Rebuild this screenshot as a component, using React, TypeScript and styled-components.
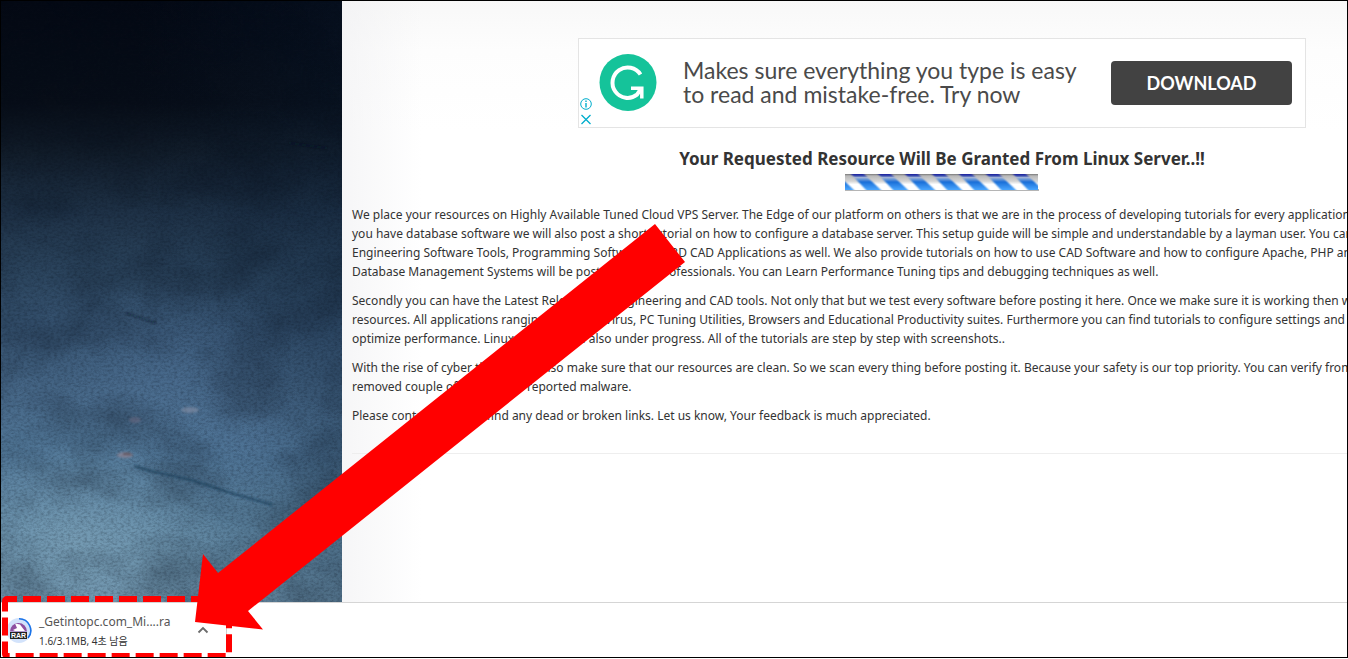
import React from "react";
import styled, { createGlobalStyle } from "styled-components";

const GlobalStyle = createGlobalStyle`
  *, *::before, *::after { box-sizing: border-box; }
  html, body { margin: 0; height: 100%; overflow: hidden; background: #fff; }
  #root { height: 100%; }
  body { font-family: "Noto Sans", "Noto Sans CJK KR", sans-serif; color: #333; }
`;

const Window = styled.div`
  position: relative;
  height: calc(100vh - 1px);
  display: flex;
  flex-direction: column;
  border: 1px solid #000;
  overflow: hidden;
`;

const Viewport = styled.div`
  flex: 1;
  min-height: 0;
  display: flex;
  overflow: hidden;
`;

const Backdrop = styled.div`
  flex: 0 0 341px;
  overflow: hidden;
  background: #0c1624;
`;

const BackdropArt = styled.svg`
  display: block;
  width: 100%;
  height: 100%;
`;

const Article = styled.main`
  flex: 1 0 1200px;
  padding: 37px 10px 0;
  background:
    linear-gradient(to right, rgba(240, 240, 242, 0.6), rgba(255, 255, 255, 0) 80px),
    linear-gradient(to bottom, #f8f8f8, #fdfdfd 50px, #fff 130px);
`;

const Ad = styled.section`
  display: flex;
  align-items: center;
  width: 728px;
  height: 90px;
  margin: 0 auto;
  padding-right: 13px;
  border: 1px solid #e4e4e4;
  background: #fff;
`;

const AdChoices = styled.div`
  align-self: flex-end;
  display: flex;
  flex-direction: column;
  gap: 2px;
  margin-right: 6px;
`;

const AdControl = styled.button`
  display: block;
  width: 14px;
  height: 14px;
  padding: 0;
  border: 0;
  background: none;
`;

const AdText = styled.p`
  flex: 1;
  margin: 0 0 2px 26px;
  font: 400 23px/24px Lato, sans-serif;
  color: #4a4a4a;
  white-space: nowrap;
`;

const DownloadButton = styled.button`
  width: 181px;
  height: 44px;
  padding: 0;
  border: 0;
  border-radius: 4px;
  background: #424242;
  color: #fff;
  font: 700 18px/24px Lato, sans-serif;
`;

const Title = styled.h1`
  margin: 18px 0 3px;
  text-align: center;
  font-size: 17px;
  line-height: 25px;
  font-weight: 700;
`;

const Loader = styled.svg`
  display: block;
  margin: 0 auto 13px;
`;

const Paragraph = styled.p`
  margin: 0 0 10px;
  font-size: 12px;
  line-height: 19px;
  white-space: nowrap;
`;

const Rule = styled.hr`
  margin: 28px 0 0;
  border: 0;
  border-top: 1px solid #eee;
`;

const DownloadBar = styled.footer`
  flex: 0 0 55px;
  display: flex;
  align-items: center;
  border-top: 1px solid #d5d5d5;
  background: #fff;
`;

const DownloadItem = styled.div`
  display: flex;
  align-items: center;
  width: 226px;
  height: 40px;
  padding: 0 13px 0 5px;
  border-right: 1px solid #d0d0d0;
`;

const FileInfo = styled.div`
  flex: 1;
  margin-left: 6px;
  padding-top: 2px;
`;

const FileName = styled.div`
  font-size: 12px;
  line-height: 20px;
  color: #555;
`;

const FileStatus = styled.div`
  font-size: 10px;
  line-height: 18px;
  color: #333;
`;

const MenuButton = styled.button`
  display: flex;
  width: 20px;
  height: 20px;
  align-items: center;
  justify-content: center;
  padding: 0;
  border: 0;
  background: none;
`;

const Annotation = styled.svg`
  position: absolute;
  left: -1px;
  bottom: -2px;
  pointer-events: none;
`;

const paragraphs = [
  [
    "We place your resources on Highly Available Tuned Cloud VPS Server. The Edge of our platform on others is that we are in the process of developing tutorials for every application. If",
    "you have database software we will also post a short tutorial on how to configure a database server. This setup guide will be simple and understandable by a layman user. You can find",
    "Engineering Software Tools, Programming Software and 3D CAD Applications as well. We also provide tutorials on how to use CAD Software and how to configure Apache, PHP and",
    "Database Management Systems will be posted by our professionals. You can Learn Performance Tuning tips and debugging techniques as well.",
  ],
  [
    "Secondly you can have the Latest Releases for Engineering and CAD tools. Not only that but we test every software before posting it here. Once we make sure it is working then we post",
    "resources. All applications ranging from Anti Virus, PC Tuning Utilities, Browsers and Educational Productivity suites. Furthermore you can find tutorials to configure settings and",
    "optimize performance. Linux tutorials are also under progress. All of the tutorials are step by step with screenshots..",
  ],
  [
    "With the rise of cyber threats, we also make sure that our resources are clean. So we scan every thing before posting it. Because your safety is our top priority. You can verify from",
    "removed couple of apps which reported malware.",
  ],
  ["Please contact us if you find any dead or broken links. Let us know, Your feedback is much appreciated."],
];

function GrungeWall() {
  return (
    <BackdropArt viewBox="0 0 341 601" preserveAspectRatio="none" aria-hidden="true">
      <defs>
        <linearGradient id="wall" x1="0" y1="0" x2="0" y2="1">
          <stop offset="0" stopColor="#040914" />
          <stop offset="0.17" stopColor="#080e18" />
          <stop offset="0.25" stopColor="#111c29" />
          <stop offset="0.35" stopColor="#1e3146" />
          <stop offset="0.45" stopColor="#2b445d" />
          <stop offset="0.55" stopColor="#375472" />
          <stop offset="0.66" stopColor="#476888" />
          <stop offset="0.76" stopColor="#527898" />
          <stop offset="0.88" stopColor="#648ca8" />
          <stop offset="1" stopColor="#6d92ab" />
        </linearGradient>
        <linearGradient id="side" x1="0" y1="0" x2="1" y2="0">
          <stop offset="0.4" stopColor="#0c1f36" stopOpacity="0" />
          <stop offset="1" stopColor="#0c1f36" stopOpacity="0.28" />
        </linearGradient>
        <radialGradient id="glow">
          <stop offset="0" stopColor="#8fb2c4" stopOpacity="0.35" />
          <stop offset="1" stopColor="#8fb2c4" stopOpacity="0" />
        </radialGradient>
        <radialGradient id="haze">
          <stop offset="0" stopColor="#6690bd" stopOpacity="0.22" />
          <stop offset="1" stopColor="#6690bd" stopOpacity="0" />
        </radialGradient>
        <filter id="grain" x="0" y="0" width="100%" height="100%" colorInterpolationFilters="sRGB">
          <feTurbulence type="fractalNoise" baseFrequency="0.3 0.45" numOctaves="3" seed="4" />
          <feColorMatrix values="0 0 0 0 0.01  0 0 0 0 0.03  0 0 0 0 0.07  1.6 0 0 0 -0.6" />
        </filter>
        <filter id="stain" x="0" y="0" width="100%" height="100%" colorInterpolationFilters="sRGB">
          <feTurbulence type="fractalNoise" baseFrequency="0.014 0.02" numOctaves="5" seed="9" />
          <feColorMatrix values="0 0 0 0 0.02  0 0 0 0 0.05  0 0 0 0 0.1  1.8 0 0 0 -0.7" />
        </filter>
        <filter id="soft"><feGaussianBlur stdDeviation="1" /></filter>
      </defs>
      <rect width="341" height="601" fill="url(#wall)" />
      <rect width="341" height="601" fill="url(#side)" />
      <ellipse cx="75" cy="540" rx="150" ry="100" fill="url(#glow)" />
      <ellipse cx="180" cy="375" rx="120" ry="100" fill="url(#haze)" />
      <ellipse cx="250" cy="445" rx="110" ry="60" fill="url(#haze)" />
      <rect width="341" height="601" filter="url(#stain)" opacity="0.3" />
      <rect width="341" height="601" filter="url(#grain)" opacity="0.28" />
      <g filter="url(#soft)" fill="none">
        <path d="M133 465L150 470L190 479L230 492L272 504" stroke="#1c3d58" strokeWidth="1.5" />
        <ellipse cx="124" cy="454" rx="8" ry="3" fill="#8b8496" opacity="0.8" />
        <path d="M122 453h8" stroke="#5b4a50" strokeWidth="2" />
        <ellipse cx="189" cy="409" rx="9" ry="3" fill="#8791a6" opacity="0.6" />
        <ellipse cx="134" cy="419" rx="6" ry="3" fill="#6b6b83" opacity="0.6" />
        <path d="M125 312l30 10M288 142l38 5" stroke="#0a1420" strokeWidth="2" opacity="0.4" />
      </g>
    </BackdropArt>
  );
}

function ProgressStripes() {
  return (
    <Loader width="196" height="18" viewBox="0 0 196 18" role="img" aria-label="Loading">
      <defs>
        <linearGradient id="track" x1="0" y1="0" x2="0" y2="1">
          <stop offset="0" stopColor="#777" />
          <stop offset="0.12" stopColor="#b9b9b9" />
          <stop offset="0.45" stopColor="#d4d4d4" />
          <stop offset="0.65" stopColor="#fff" />
          <stop offset="1" stopColor="#fff" />
        </linearGradient>
        <linearGradient id="stripe" x1="0" y1="0" x2="0" y2="1">
          <stop offset="0" stopColor="#1c1f9c" />
          <stop offset="0.12" stopColor="#3c50b0" />
          <stop offset="0.22" stopColor="#9fb2d6" />
          <stop offset="0.5" stopColor="#1a6fd8" />
          <stop offset="1" stopColor="#4aa6ff" />
        </linearGradient>
        <clipPath id="bar"><rect x="1" width="193" height="16" /></clipPath>
        <filter id="edge"><feGaussianBlur stdDeviation="1 0" /></filter>
      </defs>
      <rect x="1" y="15" width="194" height="2" fill="#b5b5b5" />
      <rect x="1" width="193" height="16" fill="url(#track)" />
      <g clipPath="url(#bar)">
        <g filter="url(#edge)">
          {Array.from({ length: 9 }, (_, i) => (
            <path key={i} d={`M${i * 27 - 20} 0h13l17 16h-15z`} fill="url(#stripe)" />
          ))}
        </g>
      </g>
    </Loader>
  );
}

export default function App() {
  return (
    <>
      <GlobalStyle />
      <Window>
        <Viewport>
          <Backdrop><GrungeWall /></Backdrop>
          <Article>
            <Ad>
              <AdChoices>
                <AdControl aria-label="Ad information">
                  <svg width="14" height="14" viewBox="0 0 14 14" fill="none" stroke="#00aecd">
                    <circle cx="7" cy="7" r="5.3" />
                    <path d="M7 6v4.5M7 3.5v1.4" strokeWidth="1.4" />
                  </svg>
                </AdControl>
                <AdControl aria-label="Close ad">
                  <svg width="14" height="14" viewBox="0 0 14 14" fill="none" stroke="#00aecd" strokeWidth="1.3">
                    <path d="M2.5 2l9 9M11.5 2l-9 9" />
                  </svg>
                </AdControl>
              </AdChoices>
              <svg width="58" height="58" viewBox="0 0 58 58" fill="none" aria-hidden="true">
                <circle cx="29" cy="28.5" r="28.5" fill="#15c39a" />
                <path d="M41.5 20.5A15.2 15.2 0 1 0 38 40.7L42.5 34" stroke="#fff" strokeWidth="4" />
                <path d="M32 34.2h10.8v10.3" stroke="#fff" strokeWidth="3.5" />
              </svg>
              <AdText>
                Makes sure everything you type is easy
                <br />
                to read and mistake-free. Try now
              </AdText>
              <DownloadButton>DOWNLOAD</DownloadButton>
            </Ad>
            <Title>Your Requested Resource Will Be Granted From Linux Server..!!</Title>
            <ProgressStripes />
            {paragraphs.map((lines, i) => (
              <Paragraph key={i}>
                {lines.map((line, j) => (
                  <React.Fragment key={j}>
                    {j > 0 && <br />}
                    {line}
                  </React.Fragment>
                ))}
              </Paragraph>
            ))}
            <Rule />
          </Article>
        </Viewport>
        <DownloadBar>
          <DownloadItem>
            <svg width="27" height="27" viewBox="0 0 27 27" fill="none" aria-hidden="true">
              <circle cx="13" cy="13.5" r="12.5" fill="#d3e3fb" />
              <path d="M13 1.8A11.7 11.7 0 0 1 22 21" stroke="#1a73e8" strokeWidth="1.6" />
              <path d="M4 14.5a8.5 8.5 0 0 1 17 0z" fill="#8e4fa0" />
              <path d="M9 6.5l5 1 3 4 2 2.500h-10l-2-1 4-2z" fill="#fff" />
              <rect x="4" y="15" width="17" height="7" fill="#222" />
              <text x="12.5" y="21" textAnchor="middle" fontSize="7" fontWeight="700" fill="#fff" fontFamily="Liberation Sans, sans-serif">RAR</text>
            </svg>
            <FileInfo>
              <FileName>_Getintopc.com_Mi....ra</FileName>
              <FileStatus>1.6/3.1MB, 4초 남음</FileStatus>
            </FileInfo>
            <MenuButton aria-label="Download options">
              <svg width="12" height="8" viewBox="0 0 12 8" fill="none" stroke="#6b6b6b" strokeWidth="1.8">
                <path d="M1.5 6.5L6 2l4.5 4.5" />
              </svg>
            </MenuButton>
          </DownloadItem>
        </DownloadBar>
        <Annotation width="700" height="440" viewBox="0 219 700 440" aria-hidden="true">
          <rect x="5" y="599" width="224" height="57" rx="2" fill="none" stroke="#f00" strokeWidth="6" strokeDasharray="18 6" strokeDashoffset="8" />
          <path d="M655 224L685 262L248 611L263 629.5L195 622L203 554L218 573Z" fill="#f00" />
        </Annotation>
      </Window>
    </>
  );
}
